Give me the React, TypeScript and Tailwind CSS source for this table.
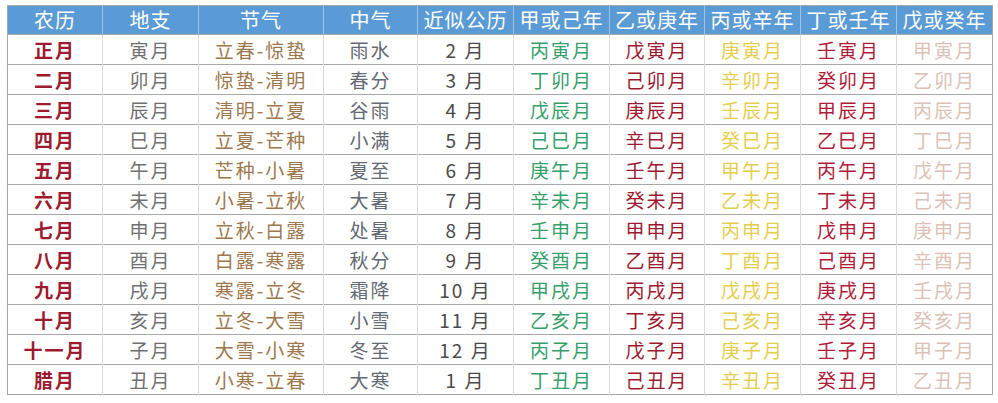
import React from "react";

const headers = ["农历", "地支", "节气", "中气", "近似公历", "甲或己年", "乙或庚年", "丙或辛年", "丁或壬年", "戊或癸年"];
const widths = ["w-[95px]", "w-[96px]", "w-[125px]", "w-[94px]", "w-[96px]", "w-[96px]", "w-[95px]", "w-[96px]", "w-[96px]", "w-[96px]"];
const colors = [
  "text-[#9e1a2e] font-bold",
  "text-[#707070]",
  "text-[#9c784c]",
  "text-[#636a73]",
  "text-[#4a4a4a]",
  "text-[#36a06a]",
  "text-[#9c1a30]",
  "text-[#e4ce4e]",
  "text-[#b01c38]",
  "text-[#dcc2b6]",
];

const rows = [
  ["正月", "寅月", "立春-惊蛰", "雨水", "2 月", "丙寅月", "戊寅月", "庚寅月", "壬寅月", "甲寅月"],
  ["二月", "卯月", "惊蛰-清明", "春分", "3 月", "丁卯月", "己卯月", "辛卯月", "癸卯月", "乙卯月"],
  ["三月", "辰月", "清明-立夏", "谷雨", "4 月", "戊辰月", "庚辰月", "壬辰月", "甲辰月", "丙辰月"],
  ["四月", "巳月", "立夏-芒种", "小满", "5 月", "己巳月", "辛巳月", "癸巳月", "乙巳月", "丁巳月"],
  ["五月", "午月", "芒种-小暑", "夏至", "6 月", "庚午月", "壬午月", "甲午月", "丙午月", "戊午月"],
  ["六月", "未月", "小暑-立秋", "大暑", "7 月", "辛未月", "癸未月", "乙未月", "丁未月", "己未月"],
  ["七月", "申月", "立秋-白露", "处暑", "8 月", "壬申月", "甲申月", "丙申月", "戊申月", "庚申月"],
  ["八月", "酉月", "白露-寒露", "秋分", "9 月", "癸酉月", "乙酉月", "丁酉月", "己酉月", "辛酉月"],
  ["九月", "戌月", "寒露-立冬", "霜降", "10 月", "甲戌月", "丙戌月", "戊戌月", "庚戌月", "壬戌月"],
  ["十月", "亥月", "立冬-大雪", "小雪", "11 月", "乙亥月", "丁亥月", "己亥月", "辛亥月", "癸亥月"],
  ["十一月", "子月", "大雪-小寒", "冬至", "12 月", "丙子月", "戊子月", "庚子月", "壬子月", "甲子月"],
  ["腊月", "丑月", "小寒-立春", "大寒", "1 月", "丁丑月", "己丑月", "辛丑月", "癸丑月", "乙丑月"],
];

export default function App() {
  return (
    <div className="w-[998px] h-[403px] bg-white pt-[5px] pl-[7px]" style={{ fontFamily: '"Noto Sans CJK SC", "Noto Sans", sans-serif' }}>
      <table className="border-collapse table-fixed border border-[#a6a6a6]">
        <thead>
          <tr className="h-[29px] bg-[#5b9bd5]">
            {headers.map((h, i) => (
              <th
                key={i}
                className={`${widths[i]} p-0 text-white text-[20px] font-normal leading-none text-center border-l border-[#9cc3e8] first:border-l-0 tracking-[1px]`}
              >
                {h}
              </th>
            ))}
          </tr>
        </thead>
        <tbody>
          {rows.map((r, ri) => (
            <tr key={ri} className="h-[30px] border-t border-[#a8a8a8]">
              {r.map((c, ci) => (
                <td
                  key={ci}
                  className={`p-0 text-center text-[19px] leading-none border-l border-[#dadada] first:border-l-0 tracking-[2px] ${colors[ci]}`}
                >
                  {c}
                </td>
              ))}
            </tr>
          ))}
        </tbody>
      </table>
    </div>
  );
}
